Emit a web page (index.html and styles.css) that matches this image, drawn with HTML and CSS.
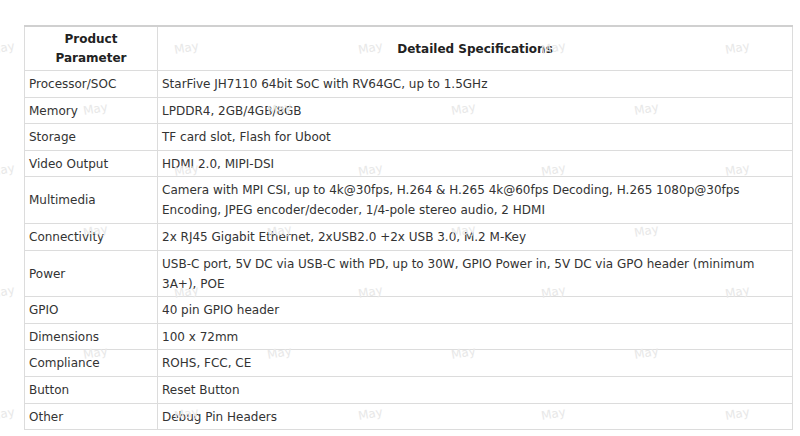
FILE: index.html
```html
<!DOCTYPE html>
<html lang="en">
<head>
    <meta charset="UTF-8">
    <title>Product Parameters</title>
    <link rel="stylesheet" href="styles.css">
</head>
<body>
    <div class="page">
        <table class="spec-table">
            <thead>
                <tr>
                    <th class="param-col">Product<br>Parameter</th>
                    <th>Detailed Specifications</th>
                </tr>
            </thead>
            <tbody>
                <tr><td>Processor/SOC</td><td>StarFive JH7110 64bit SoC with RV64GC, up to 1.5GHz</td></tr>
                <tr><td>Memory</td><td>LPDDR4, 2GB/4GB/8GB</td></tr>
                <tr><td>Storage</td><td>TF card slot, Flash for Uboot</td></tr>
                <tr><td>Video Output</td><td>HDMI 2.0, MIPI-DSI</td></tr>
                <tr><td>Multimedia</td><td>Camera with MPI CSI, up to 4k@30fps, H.264 &amp; H.265 4k@60fps Decoding, H.265 1080p@30fps<br>Encoding, JPEG encoder/decoder, 1/4-pole stereo audio, 2 HDMI</td></tr>
                <tr><td>Connectivity</td><td>2x RJ45 Gigabit Ethernet, 2xUSB2.0 +2x USB 3.0, M.2 M-Key</td></tr>
                <tr><td>Power</td><td>USB-C port, 5V DC via USB-C with PD, up to 30W, GPIO Power in, 5V DC via GPO header (minimum<br>3A+), POE</td></tr>
                <tr><td>GPIO</td><td>40 pin GPIO header</td></tr>
                <tr><td>Dimensions</td><td>100 x 72mm</td></tr>
                <tr><td>Compliance</td><td>ROHS, FCC, CE</td></tr>
                <tr><td>Button</td><td>Reset Button</td></tr>
                <tr><td>Other</td><td>Debug Pin Headers</td></tr>
            </tbody>
        </table>
    </div>

    <!-- watermark layer -->
    <div class="watermarks">
        <div class="wm-row"><span>May</span><span>May</span><span>May</span><span>May</span><span>May</span></div>
        <div class="wm-row odd"><span>May</span><span>May</span><span>May</span><span>May</span></div>
        <div class="wm-row"><span>May</span><span>May</span><span>May</span><span>May</span><span>May</span></div>
        <div class="wm-row odd"><span>May</span><span>May</span><span>May</span><span>May</span></div>
        <div class="wm-row"><span>May</span><span>May</span><span>May</span><span>May</span><span>May</span></div>
        <div class="wm-row odd"><span>May</span><span>May</span><span>May</span><span>May</span></div>
        <div class="wm-row"><span>May</span><span>May</span><span>May</span><span>May</span><span>May</span></div>
    </div>
</body>
</html>
```

FILE: styles.css
```css
body {
    margin: 0;
    background-color: #fff;
    font-family: "DejaVu Sans", Verdana, sans-serif;
    color: #333;
}

.page {
    padding: 25px 7px 0 24px;
}

.spec-table {
    width: 100%;
    border-collapse: collapse;
    border: 1px solid #bdbdbd;
    border-top: 2px solid #d0d0d0;
    font-size: 12px;
}

.spec-table th,
.spec-table td {
    border: 1px solid #dcdcdc;
    padding: 3px 4px 2.6px;
    line-height: 20px;
    text-align: left;
    vertical-align: middle;
}

.spec-table th {
    font-weight: bold;
    text-align: center;
    line-height: 19px;
    color: #222;
    padding: 3px 4px 2px;
}

.spec-table .param-col {
    width: 124px;
}

.watermarks {
    position: absolute;
    top: 38px;
    left: 0;
    width: 800px;
    display: flex;
    flex-direction: column;
    gap: 41px;
    pointer-events: none;
    overflow: hidden;
}

.wm-row {
    display: flex;
    gap: 159px;
    height: 20px;
}

.wm-row span {
    display: inline-block;
    white-space: nowrap;
    line-height: 20px;
    font-family: "DejaVu Sans", sans-serif;
    font-size: 12px;
    color: #e8e8e8;
    transform: rotate(-10deg);
}

.wm-row span:first-child {
    margin-left: -10px;
}

.wm-row.odd span:first-child {
    margin-left: 83px;
}
```
